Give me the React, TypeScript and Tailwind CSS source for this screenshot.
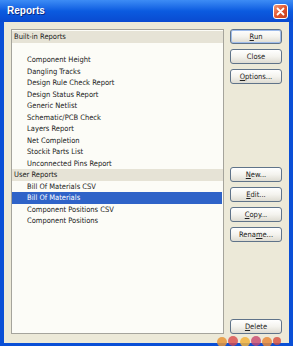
import React from "react";

const font = { fontFamily: '"DejaVu Sans Condensed", "Liberation Sans", sans-serif' };

function Btn({ label, u, def }: { label: string; u: number; def?: boolean }) {
  const inner =
    u < 0 ? (
      <span>{label}</span>
    ) : (
      <span>
        {label.slice(0, u)}
        <span className="underline">{label.slice(u, u + 1)}</span>
        {label.slice(u + 1)}
      </span>
    );
  return (
    <div
      className={
        "h-[15px] w-[52px] rounded-[3px] border border-[#5f7389] bg-gradient-to-b from-[#ffffff] via-[#f4f3ee] to-[#dedcd2] flex items-center justify-center text-[7.5px] leading-none text-[#222] " +
        (def ? "shadow-[inset_0_0_0_1px_#9fbcea]" : "")
      }
    >
      {inner}
    </div>
  );
}

const builtIn = [
  "Component Height",
  "Dangling Tracks",
  "Design Rule Check Report",
  "Design Status Report",
  "Generic Netlist",
  "Schematic/PCB Check",
  "Layers Report",
  "Net Completion",
  "Stockit Parts List",
  "Unconnected Pins Report",
];

const user = ["Bill Of Materials CSV", "Bill Of Materials", "Component Positions CSV", "Component Positions"];

export default function App() {
  return (
    <div className="relative w-[293px] h-[346px] bg-[#0a4fd6] flex flex-col overflow-hidden" style={font}>
      {/* title bar */}
      <div className="h-[22px] shrink-0 bg-gradient-to-b from-[#3d8cf5] via-[#0b5be0] to-[#0a4ad0] flex items-center pl-[7px] pr-[5px]">
        <span
          className="text-white font-bold text-[10px] leading-none"
          style={{ fontFamily: '"Liberation Sans", sans-serif', textShadow: "1px 1px 0 #0a2a80" }}
        >
          Reports
        </span>
        <div className="ml-auto mt-[1px] w-[15px] h-[15px] rounded-[3px] border border-white bg-gradient-to-br from-[#f09a78] via-[#e0542e] to-[#c4401c] flex items-center justify-center">
          <svg width="9" height="9" viewBox="0 0 9 9">
            <path d="M1.5 1.5 L7.5 7.5 M7.5 1.5 L1.5 7.5" stroke="white" strokeWidth="1.8" strokeLinecap="round" />
          </svg>
        </div>
      </div>
      {/* body */}
      <div className="flex-1 mx-[4px] mb-[3px] bg-[#ece9d8] flex pt-[7px] pl-[7px] pr-[7px] pb-[9px] gap-[6px]">
        {/* list */}
        <div className="w-[213px] border border-[#a5a49c] bg-[#fcfcf7] flex flex-col text-[7.5px] text-[#1a1a1a] pt-[1px]">
          <div className="h-[11.5px] bg-[#e6e3d6] flex items-center pl-[2px]">Built-in Reports</div>
          <div className="h-[11.5px]" />
          {builtIn.map((t) => (
            <div key={t} className="h-[11.5px] flex items-center pl-[15px]">
              {t}
            </div>
          ))}
          <div className="h-[11.5px] bg-[#e6e3d6] flex items-center pl-[2px]">User Reports</div>
          {user.map((t) => (
            <div
              key={t}
              className={
                "h-[11.5px] flex items-center pl-[15px] " +
                (t === "Bill Of Materials" ? "bg-[#2f63c8] text-white mr-[1px]" : "")
              }
            >
              {t}
            </div>
          ))}
        </div>
        {/* buttons */}
        <div className="flex flex-col">
          <div className="flex flex-col gap-[5px]">
            <Btn label="Run" u={0} def />
            <Btn label="Close" u={-1} />
            <Btn label="Options..." u={0} />
          </div>
          <div className="flex flex-col gap-[5px] mt-[83px]">
            <Btn label="New..." u={0} />
            <Btn label="Edit..." u={0} />
            <Btn label="Copy..." u={0} />
            <Btn label="Rename..." u={4} />
          </div>
          <div className="mt-auto">
            <Btn label="Delete" u={0} />
          </div>
        </div>
      </div>
      {/* watermark */}
      <div className="absolute left-[216px] top-[334px] pointer-events-none">
        <svg width="66" height="12" viewBox="0 0 66 12">
          <circle cx="6" cy="8" r="5" fill="#e8963a" opacity="0.85" />
          <circle cx="17" cy="7" r="5" fill="#d94a4a" opacity="0.8" />
          <circle cx="29" cy="8" r="5" fill="#f2b33d" opacity="0.85" />
          <circle cx="40" cy="7" r="5" fill="#c8466e" opacity="0.8" />
          <circle cx="51" cy="8" r="5" fill="#e98a3a" opacity="0.85" />
          <circle cx="61" cy="7" r="4" fill="#d64c3c" opacity="0.8" />
        </svg>
      </div>
    </div>
  );
}
